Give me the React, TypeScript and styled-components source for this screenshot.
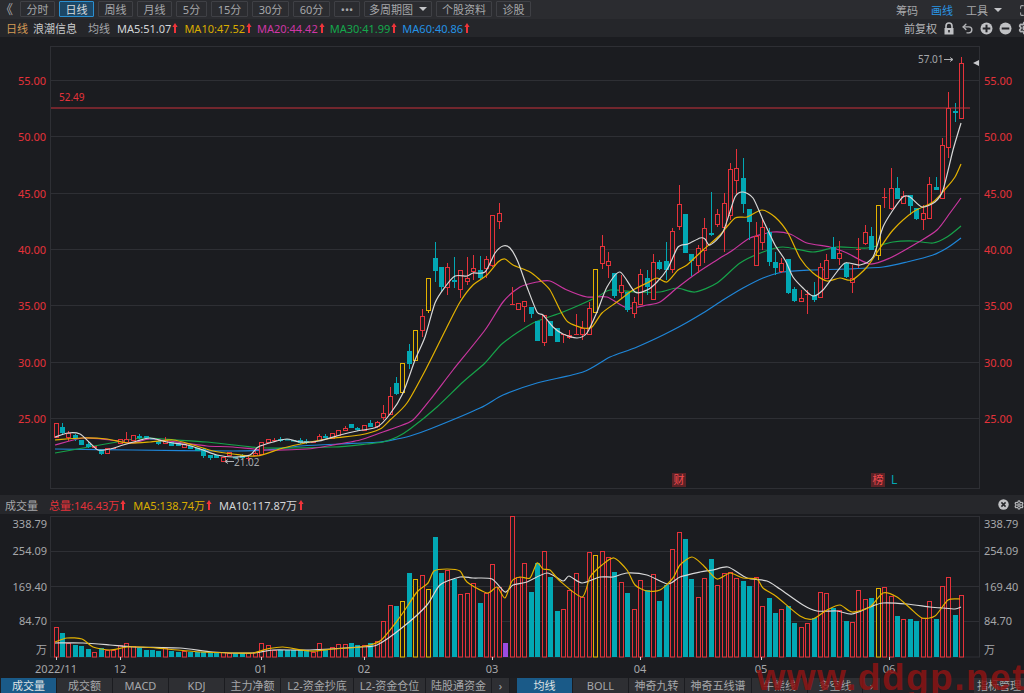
import styled, { createGlobalStyle } from "styled-components";
import { Maximize, Settings, Undo2 } from "lucide-react";

type Kind = "r" | "g" | "y" | "p";
type Candle = [number, Kind, number, number, number?, number?];
type Pt = [number, number];

const UI_FONT = `"Noto Sans", "Noto Sans CJK SC", sans-serif`;
const RED = "#e5323a";
const TEAL = "#02a8b4";
const YELLOW = "#e4b200";
const PURPLE = "#9a4ce2";
const WHITE_LINE = "#d8d8d8";
const MAGENTA = "#c9369f";
const GREEN = "#16a34a";
const BLUE = "#1f86d8";
const GRID = "#2e2f34";
const BG = "#1b1c20";

const kindColor = { r: RED, g: TEAL, y: YELLOW, p: PURPLE };

const stepX = 6.423;
const barX = (i: number) => Math.round(55.6 + stepX * i);

// index, kind, body top, body bottom, wick top, wick bottom (page pixels)
const candles: Candle[] = [
  [0, "r", 423, 437], [1, "g", 427, 433, 423, 434], [2, "r", 433, 437, 431, 441], [3, "g", 435, 439, 434, 441],
  [4, "g", 440, 445], [5, "g", 444, 447, 442, 448], [6, "r", 446, 447], [7, "g", 450, 454, 449, 455],
  [8, "r", 448, 453], [9, "r", 448, 448], [10, "r", 439, 443], [11, "r", 439, 442, 432, 442],
  [12, "r", 435, 440], [13, "g", 436, 438, 434, 439], [14, "g", 436, 438], [15, "g", 438, 439],
  [16, "g", 441, 444, 440, 445], [17, "r", 440, 443, 437, 444], [18, "g", 442, 446], [19, "g", 443, 446],
  [20, "r", 444, 447], [21, "g", 446, 449], [22, "g", 448, 451], [23, "g", 449, 456, 448, 458],
  [24, "g", 455, 458, 455, 460], [25, "g", 455, 458], [26, "r", 457, 461], [27, "r", 452, 455],
  [28, "g", 457, 458], [29, "g", 455, 458, 454, 460], [30, "r", 458, 458, 456, 461], [31, "r", 453, 455, 451, 456],
  [32, "r", 442, 454], [33, "r", 439, 442], [34, "r", 440, 440, 438, 442], [35, "g", 439, 441, 437, 442],
  [36, "g", 439, 440], [37, "g", 440, 441], [38, "g", 440, 443, 438, 444], [39, "g", 441, 443, 439, 444],
  [40, "r", 442, 442], [41, "r", 436, 440, 434, 440], [42, "g", 436, 438, 434, 438], [43, "r", 433, 438],
  [44, "r", 430, 435], [45, "r", 428, 430, 426, 431], [46, "g", 424, 428], [47, "g", 428, 430, 427, 431],
  [48, "r", 425, 430], [49, "g", 423, 427, 420, 427], [50, "r", 422, 426, 421, 428], [51, "r", 413, 417, 405, 420],
  [52, "r", 396, 414, 387, 415], [53, "g", 383, 394, 377, 395], [54, "y", 363, 392, 363, 394], [55, "g", 351, 364, 344, 369],
  [56, "y", 330, 360], [57, "r", 316, 330, 309, 337], [58, "y", 278, 310, 278, 313], [59, "g", 258, 271, 242, 282],
  [60, "g", 267, 287, 267, 292], [61, "r", 267, 287, 263, 295], [62, "g", 280, 282, 257, 288], [63, "r", 270, 289, 270, 298],
  [64, "r", 278, 281, 257, 285], [65, "r", 268, 271, 255, 280], [66, "g", 270, 278, 256, 280], [67, "r", 259, 268, 256, 278],
  [68, "r", 215, 265, 215, 267], [69, "r", 213, 221, 203, 229], [71, "r", 304, 304, 287, 304], [72, "r", 303, 309],
  [73, "r", 301, 306, 301, 322], [74, "g", 307, 314, 307, 318], [75, "g", 321, 341], [76, "r", 315, 342, 315, 346],
  [77, "g", 321, 336], [78, "g", 328, 342], [79, "r", 334, 334, 334, 343], [80, "r", 335, 337, 330, 339],
  [81, "r", 334, 334, 314, 335], [82, "r", 328, 334, 321, 340], [83, "r", 308, 334, 302, 334], [84, "y", 269, 312],
  [85, "r", 246, 263, 235, 269], [86, "r", 261, 265, 252, 278], [87, "g", 273, 296, 273, 298], [88, "r", 285, 292, 275, 298],
  [89, "g", 292, 310, 292, 312], [90, "r", 302, 313, 297, 318], [91, "r", 274, 304, 269, 304], [92, "g", 278, 287, 270, 295],
  [93, "r", 262, 299, 254, 299], [94, "g", 262, 269, 260, 270], [95, "g", 261, 270, 242, 280], [96, "r", 231, 269, 228, 273],
  [97, "r", 204, 226, 185, 230], [98, "g", 214, 253], [99, "g", 254, 261, 254, 276], [100, "r", 248, 265, 245, 273],
  [101, "r", 228, 250, 218, 263], [102, "g", 233, 235, 192, 236], [103, "r", 214, 224, 209, 227], [104, "r", 203, 227, 193, 252],
  [105, "r", 169, 215, 163, 220], [106, "r", 168, 180, 149, 195], [107, "g", 178, 204, 158, 213], [108, "g", 209, 222, 209, 240],
  [109, "r", 236, 265, 222, 265], [110, "r", 227, 242, 218, 250], [111, "g", 232, 262, 228, 266], [112, "g", 262, 268, 252, 275],
  [113, "r", 263, 271, 258, 273], [114, "g", 259, 293, 259, 294], [115, "g", 289, 301, 287, 302], [116, "r", 298, 301, 290, 302],
  [117, "r", 294, 294, 290, 314], [118, "g", 295, 300, 282, 302], [119, "r", 267, 297, 263, 298], [120, "r", 260, 278, 254, 278],
  [121, "g", 247, 259, 237, 259], [122, "r", 253, 258, 241, 265], [123, "g", 263, 277, 262, 278], [124, "r", 278, 282, 265, 293],
  [125, "r", 249, 249, 238, 268], [126, "r", 232, 243, 225, 245], [127, "g", 236, 250, 227, 250], [128, "y", 205, 255, 205, 260],
  [129, "r", 197, 197, 188, 208], [130, "r", 188, 208, 168, 210], [131, "g", 188, 199, 177, 199], [132, "r", 196, 203, 191, 203],
  [133, "g", 195, 206, 195, 215], [134, "g", 208, 219, 208, 220], [135, "r", 213, 219, 205, 230], [136, "r", 184, 218, 177, 218],
  [137, "g", 187, 190, 177, 190], [138, "r", 145, 198, 138, 198], [139, "r", 108, 147, 92, 158], [140, "g", 111, 113, 103, 122],
  [141, "r", 63, 118, 57, 118],
];

const volumes = `r627 g633 r643 g645 g646 g649 r652 g648 r650 r650 r645 r643 r646 g648 g650 g650 g651 r648 g651 g652 r651 g652 g652 g652 g652 g652 r652 r653 g653 g653 r653 r652 r643 r645 r650 g650 g650 g650 g650 g650 r652 r643 g649 r647 r644 r644 g643 g645 r645 g643 r641 r621 r605 g606 y601 g573 y579 r575 y589 g537 g573 r570 g579 r594 r593 r583 g603 r593 r564 r587 p643 r516 r577 r563 g592 g563 r551 g577 g611 r609 r590 r573 r597 r552 y555 r551 r557 g572 r582 g593 r609 r580 g590 r574 g601 g585 r549 r532 g539 g579 r597 r578 g559 r585 r573 r572 r578 g581 g586 r577 r606 g598 g613 r609 g606 g623 r627 r623 g618 r592 r593 g608 r610 g621 r622 r590 r599 g598 y588 r587 r596 g616 r619 g619 g621 r618 r601 g619 r586 r577 g615 r595`.split(" ");

const ma5: Pt[] = [[55,437],[68,433],[80,434],[90,443],[98,450],[110,449],[123,445],[137,441],[150,438],[167,442],[187,445],[203,450],[217,455],[233,457],[250,455],[258,447],[273,442],[287,439],[300,442],[319,441],[340,435],[357,431],[377,427],[390,414],[403,393],[415,360],[425,337],[435,303],[445,287],[455,276],[467,276],[473,273],[485,272],[495,253],[503,246],[510,248],[518,262],[527,287],[537,312],[543,315],[553,327],[563,334],[577,338],[587,333],[597,312],[607,287],[620,272],[635,292],[647,290],[657,282],[668,268],[678,247],[688,244],[700,238],[705,239],[710,245],[723,232],[735,197],[743,192],[753,198],[763,220],[775,245],[785,260],[793,277],[803,288],[813,296],[823,290],[833,277],[845,263],[860,265],[873,257],[883,227],[893,210],[903,197],[910,197],[922,207],[935,202],[943,190],[953,150],[961,123]];
const ma10: Pt[] = [[55,440],[82,438],[107,439],[127,443],[150,442],[173,440],[193,445],[213,451],[233,454],[257,456],[283,448],[310,442],[333,438],[360,435],[380,429],[390,420],[407,403],[427,367],[447,327],[460,302],[473,285],[487,275],[498,262],[505,259],[513,265],[530,272],[540,280],[550,290],[560,310],[568,322],[583,328],[592,327],[602,313],[617,302],[633,290],[647,283],[657,278],[667,282],[678,270],[687,265],[703,250],[720,235],[735,218],[747,217],[762,210],[775,217],[788,233],[800,258],[813,273],[827,281],[840,278],[852,280],[867,267],[880,248],[893,230],[913,212],[933,202],[947,187],[955,177],[961,164]];
const ma20: Pt[] = [[55,445],[83,438],[110,440],[133,443],[150,439],[183,443],[207,446],[233,447],[267,450],[307,449],[333,445],[360,440],[380,433],[397,427],[413,420],[430,400],[453,370],[485,330],[503,302],[520,287],[537,282],[550,281],[567,290],[587,297],[607,297],[627,308],[647,305],[660,302],[677,288],[697,273],[717,260],[733,250],[750,238],[773,232],[790,234],[807,243],[830,247],[847,253],[870,264],[890,258],[917,243],[937,230],[950,213],[961,198]];
const ma30: Pt[] = [[55,453],[83,448],[117,442],[143,438],[177,440],[207,442],[243,446],[267,448],[333,447],[367,444],[383,442],[397,437],[410,429],[437,407],[463,382],[485,363],[503,343],[533,323],[563,312],[597,297],[610,290],[637,292],[660,292],[677,288],[695,292],[717,283],[740,263],[763,252],[783,247],[813,252],[837,247],[867,248],[893,242],[913,241],[933,243],[947,237],[961,226]];
const ma60: Pt[] = [[55,449],[133,450],[233,451],[267,450],[300,446],[340,444],[380,442],[397,439],[410,436],[430,429],[480,408],[503,395],[537,383],[583,372],[610,357],[637,347],[673,330],[703,313],[723,300],[743,288],[763,278],[783,272],[810,270],[847,269],[883,267],[907,262],[933,255],[947,248],[961,238]];
const volMa5: Pt[] = [[55,642],[67,638],[82,639],[93,647],[110,650],[127,647],[143,647],[167,649],[200,652],[233,653],[253,653],[267,649],[283,647],[310,651],[333,649],[360,647],[380,641],[400,617],[417,592],[428,583],[434,571],[447,569],[460,571],[467,582],[487,593],[497,587],[505,598],[512,581],[520,577],[530,578],[537,563],[543,569],[550,570],[560,581],[582,597],[590,577],[602,565],[614,558],[627,570],[635,585],[647,591],[660,590],[673,578],[680,565],[692,557],[703,565],[717,579],[730,573],[743,578],[757,579],[763,588],[777,597],[800,616],[813,619],[827,610],[840,605],[852,612],[870,607],[883,593],[897,597],[910,608],[922,618],[935,616],[948,600],[960,599]];
const volMa10: Pt[] = [[55,643],[83,643],[110,645],[133,647],[180,648],[213,652],[253,653],[273,650],[310,650],[360,647],[377,645],[403,627],[427,605],[440,585],[460,577],[473,578],[492,579],[505,592],[513,585],[527,582],[547,573],[563,581],[569,576],[582,583],[600,577],[613,577],[627,573],[647,575],[668,584],[680,577],[700,572],[713,570],[728,567],[747,578],[767,581],[780,589],[803,605],[817,611],[837,611],[852,614],[870,607],[883,603],[907,604],[930,607],[943,608],[955,609],[961,607]];

// Catmull-Rom through the sampled points
function smooth(pts: Pt[]) {
  let d = `M${pts[0][0]} ${pts[0][1]}`;
  for (let i = 0; i < pts.length - 1; i++) {
    const a = pts[i - 1] || pts[i];
    const b = pts[i];
    const c = pts[i + 1];
    const e = pts[i + 2] || c;
    const c1x = b[0] + (c[0] - a[0]) / 8;
    const c1y = b[1] + (c[1] - a[1]) / 8;
    const c2x = c[0] - (e[0] - b[0]) / 8;
    const c2y = c[1] - (e[1] - b[1]) / 8;
    d += `C${c1x.toFixed(1)} ${c1y.toFixed(1)} ${c2x.toFixed(1)} ${c2y.toFixed(1)} ${c[0]} ${c[1]}`;
  }
  return d;
}

const GlobalStyle = createGlobalStyle`
  html, body { margin: 0; padding: 0; background: ${BG}; }
  * { box-sizing: border-box; }
`;

const Page = styled.div`
  position: relative;
  width: 1024px;
  height: 693px;
  overflow: hidden;
  display: flex;
  flex-direction: column;
  background: ${BG};
  font-family: ${UI_FONT};
  font-size: 11px;
  color: #a6a7aa;
`;

const Toolbar = styled.div`
  height: 19px;
  flex: none;
  display: flex;
  align-items: flex-start;
  padding-top: 1px;
  gap: 4px;
  background: #2b2c30;
`;

const Back = styled.span`
  width: 16px;
  line-height: 16px;
  font-size: 13px;
  color: #a6a7aa;
`;

const ToolButton = styled.div<{ $w: number; $active?: boolean }>`
  width: ${(p) => p.$w}px;
  height: 16px;
  flex: none;
  display: flex;
  align-items: center;
  justify-content: center;
  gap: 6px;
  border: 1px solid ${(p) => (p.$active ? "#2a8fd0" : "#3f4045")};
  background: ${(p) => (p.$active ? "#1c4766" : "#2b2c30")};
  color: ${(p) => (p.$active ? "#d8dadc" : "#a6a7aa")};
  border-radius: 1px;
  white-space: nowrap;
`;

const Caret = styled.span`
  width: 0;
  height: 0;
  border-left: 4px solid transparent;
  border-right: 4px solid transparent;
  border-top: 4px solid #c4c5c8;
`;

const ToolRight = styled.div`
  margin-left: auto;
  margin-right: -8px;
  display: flex;
  align-items: center;
  gap: 13px;
  height: 18px;
`;

const ToolLink = styled.span<{ $on?: boolean }>`
  color: ${(p) => (p.$on ? "#2a96e6" : "#a6a7aa")};
  display: flex;
  align-items: center;
  gap: 6px;
`;

const ExpandIcon = styled(Maximize)`
  margin-left: 4px;
  color: #a6a7aa;
`;

const LegendBar = styled.div`
  height: 18px;
  flex: none;
  display: flex;
  align-items: center;
  padding-left: 6px;
  background: #25262a;
  white-space: nowrap;
`;

const LegendText = styled.span<{ $color: string; $ml: number }>`
  color: ${(p) => p.$color};
  margin-left: ${(p) => p.$ml}px;
  display: inline-flex;
  align-items: center;
`;

const LegendTools = styled.div`
  margin-left: auto;
  margin-right: -8px;
  display: flex;
  align-items: center;
  gap: 6px;
  color: #b4b5b8;
`;

const VolumeTools = styled.div`
  margin-left: auto;
  margin-right: 0;
  display: flex;
  align-items: center;
  gap: 5px;
  color: #b4b5b8;
`;

const ChartSvg = styled.svg`
  display: block;
  flex: none;
  font-family: ${UI_FONT};
`;

const VolumeBar = styled.div`
  height: 19px;
  flex: none;
  display: flex;
  align-items: center;
  padding-left: 5px;
  background: #26272b;
  white-space: nowrap;
`;

const TabRow = styled.div`
  height: 15px;
  flex: none;
  display: flex;
  padding-left: 1px;
  background: #1f2024;
`;

const Tab = styled.div<{ $w: number; $active?: boolean; $ml?: number }>`
  width: ${(p) => p.$w}px;
  margin-left: ${(p) => p.$ml || 0}px;
  flex: none;
  display: flex;
  align-items: center;
  justify-content: center;
  border-right: 1px solid #1b1c20;
  background: ${(p) => (p.$active ? "#1a5a88" : "#2e2f33")};
  color: ${(p) => (p.$active ? "#dfe2e4" : "#a6a7aa")};
  line-height: 15px;
  white-space: nowrap;
`;

const Watermark = styled.div`
  position: absolute;
  right: -2px;
  bottom: -3px;
  font-family: "Liberation Sans", sans-serif;
  font-weight: 700;
  font-size: 37px;
  line-height: 37px;
  letter-spacing: 1.5px;
  color: rgba(140, 20, 20, 0.85);
  white-space: nowrap;
`;

function UpArrow() {
  return (
    <svg width="6" height="12" viewBox="0 0 6 12" style={{ marginLeft: 1 }}>
      <path d="M3 1 L5.6 5 H4 V11 H2 V5 H.4 Z" fill="#f0343a" />
    </svg>
  );
}

function CircleSign({ plus }: { plus?: boolean }) {
  return (
    <svg width="13" height="13" viewBox="0 0 13 13">
      <circle cx="6.5" cy="6.5" r="6" fill="#c0c1c4" />
      <rect x="2.7" y="5.5" width="7.6" height="2" fill="#25262a" />
      {plus && <rect x="5.5" y="2.7" width="2" height="7.6" fill="#25262a" />}
    </svg>
  );
}

function LockIcon() {
  return (
    <svg width="12" height="13" viewBox="0 0 12 13">
      <path d="M3 6V4a3 3 0 0 1 6 0v2" fill="none" stroke="#c0c1c4" strokeWidth="1.6" />
      <rect x="1.5" y="6" width="9" height="6.5" fill="#c0c1c4" />
      <rect x="5.2" y="8" width="1.6" height="2.4" fill="#25262a" />
    </svg>
  );
}

function CloseDot() {
  return (
    <svg width="11" height="11" viewBox="0 0 11 11">
      <circle cx="5.5" cy="5.5" r="5.2" fill="#c0c1c4" />
      <path d="M3.4 3.4l4.2 4.2M7.6 3.4l-4.2 4.2" stroke="#26272b" strokeWidth="1.5" />
    </svg>
  );
}

function Candles() {
  return (
    <g>
      {candles.map(([i, k, top, bottom, high, low]) => {
        const x = barX(i);
        const c = kindColor[k];
        const hi = high ?? top;
        const lo = low ?? bottom;
        return (
          <g key={i}>
            {hi < top && <line x1={x + 0.5} x2={x + 0.5} y1={hi} y2={top} stroke={c} />}
            {lo > bottom && <line x1={x + 0.5} x2={x + 0.5} y1={bottom} y2={lo} stroke={c} />}
            {k === "g" ? (
              <rect x={x - 2} y={top} width={5} height={Math.max(bottom - top, 1.5)} fill={c} />
            ) : top === bottom ? (
              <line x1={x - 2} x2={x + 3} y1={top + 0.5} y2={top + 0.5} stroke={c} />
            ) : (
              <rect x={x - 1.5} y={top + 0.5} width={4} height={bottom - top} fill={BG} stroke={c} />
            )}
          </g>
        );
      })}
    </g>
  );
}

function Line({ pts, color }: { pts: Pt[]; color: string }) {
  return <path d={smooth(pts)} fill="none" stroke={color} strokeWidth={1.2} strokeLinejoin="round" />;
}

const priceLevels = [55, 50, 45, 40, 35, 30, 25];
const priceY = (p: number) => Math.round(80 + (55 - p) * 11.27) + 0.5;

function PriceChart() {
  return (
    <ChartSvg width={1024} height={458} viewBox="0 37 1024 458">
      <rect x={50.5} y={46.5} width={929} height={442} fill="none" stroke={GRID} />
      {priceLevels.map((p) => (
        <g key={p}>
          <line x1={51} x2={979} y1={priceY(p)} y2={priceY(p)} stroke={GRID} />
          <text x={46} y={priceY(p) + 4.5} fontSize={11} fill={RED} textAnchor="end">
            {p.toFixed(2)}
          </text>
          <text x={984} y={priceY(p) + 4.5} fontSize={11} fill={RED}>
            {p.toFixed(2)}
          </text>
        </g>
      ))}
      <text x={59} y={101} fontSize={10} fill={RED}>52.49</text>
      <Line pts={ma60} color={BLUE} />
      <Line pts={ma30} color={GREEN} />
      <Line pts={ma20} color={MAGENTA} />
      <Candles />
      <Line pts={ma10} color={YELLOW} />
      <Line pts={ma5} color={WHITE_LINE} />
      <line x1={51} x2={970} y1={108} y2={108} stroke="#c9303a" strokeWidth={1.2} />
      <text x={918} y={63} fontSize={10} fill="#a6a7aa">57.01</text>
      <path d="M944 59.5h9m-3-2 3 2-3 2" fill="none" stroke="#b0b1b4" />
      <path d="M979 60v6l-6-3z" fill="#c8c9cc" />
      <path d="M234 461.5h-9m3-2-3 2 3 2" fill="none" stroke="#b0b1b4" />
      <text x={234} y={466} fontSize={10} fill="#a6a7aa">21.02</text>
      <rect x={672} y={473} width={14} height={14} fill="#5c2226" />
      <text x={673.5} y={484} fontSize={11} fill="#ef4a4f">财</text>
      <rect x={871} y={473} width={14} height={14} fill="#5c2226" />
      <text x={872.5} y={484} fontSize={11} fill="#ef4a4f">榜</text>
      <text x={891} y={484} fontSize={12} fill={TEAL}>L</text>
    </ChartSvg>
  );
}

const volLevels: [string, number, number][] = [
  ["338.79", 516, 528],
  ["254.09", 551.5, 555],
  ["169.40", 586.5, 591],
  ["84.70", 621.5, 625],
];
const months: [string, number][] = [
  ["2022/11", 56], ["12", 120], ["01", 261], ["02", 364], ["03", 492], ["04", 640], ["05", 761], ["06", 889],
];

function VolumeChart() {
  return (
    <ChartSvg width={1024} height={164} viewBox="0 514 1024 164">
      <rect x={50.5} y={516.5} width={929} height={140.5} fill="none" stroke={GRID} />
      {volLevels.map(([label, grid, base]) => (
        <g key={label}>
          {grid > 520 && <line x1={51} x2={979} y1={grid} y2={grid} stroke={GRID} />}
          <text x={47} y={base} fontSize={11} fill="#a6a7aa" textAnchor="end">{label}</text>
          <text x={984} y={base} fontSize={11} fill="#a6a7aa">{label}</text>
        </g>
      ))}
      <text x={47} y={654} fontSize={11} fill="#a6a7aa" textAnchor="end">万</text>
      <text x={984} y={654} fontSize={11} fill="#a6a7aa">万</text>
      {volumes.map((v, i) => {
        const k = v[0] as Kind;
        const top = Number(v.slice(1));
        const x = barX(i);
        return k === "g" || k === "p" ? (
          <rect key={i} x={x - 2} y={top} width={5} height={657 - top} fill={kindColor[k]} />
        ) : (
          <rect key={i} x={x - 1.5} y={top + 0.5} width={4} height={656.5 - top} fill={BG} stroke={kindColor[k]} />
        );
      })}
      <Line pts={volMa10} color={WHITE_LINE} />
      <Line pts={volMa5} color={YELLOW} />
      {months.map(([label, x]) => (
        <g key={label}>
          <line x1={x + 0.5} x2={x + 0.5} y1={657} y2={660} stroke="#d0d0d0" />
          <text x={x} y={673} fontSize={11} fill="#a6a7aa" textAnchor="middle">{label}</text>
        </g>
      ))}
    </ChartSvg>
  );
}

const toolButtons: [string, number][] = [
  ["分时", 35], ["日线", 35], ["周线", 35], ["月线", 35], ["5分", 31], ["15分", 37], ["30分", 37], ["60分", 37], ["•••", 26],
];

const tabsLeft: [string, number][] = [
  ["成交量", 56], ["成交额", 56], ["MACD", 56], ["KDJ", 56], ["主力净额", 56], ["L2-资金抄底", 73], ["L2-资金仓位", 72], ["陆股通资金", 66], ["›", 18],
];
const tabsRight: [string, number][] = [
  ["均线", 56], ["BOLL", 56], ["神奇九转", 56], ["神奇五线谱", 67], ["牛熊线", 56], ["多空线", 55], ["›", 18],
];

const maLegend: [string, string, number][] = [
  ["MA5:51.07", "#d4d5d8", 7],
  ["MA10:47.52", "#d9ac00", 6],
  ["MA20:44.42", "#cf36a6", 5],
  ["MA30:41.99", "#14a84c", 5],
  ["MA60:40.86", "#2492e4", 5],
];

export default function App() {
  return (
    <Page>
      <GlobalStyle />
      <Toolbar>
        <Back>《</Back>
        {toolButtons.map(([label, w]) => (
          <ToolButton key={label} $w={w} $active={label === "日线"}>{label}</ToolButton>
        ))}
        <ToolButton $w={68}>多周期图<Caret /></ToolButton>
        <ToolButton $w={56}>个股资料</ToolButton>
        <ToolButton $w={35}>诊股</ToolButton>
        <ToolRight>
          <ToolLink>筹码</ToolLink>
          <ToolLink $on>画线</ToolLink>
          <ToolLink>工具<Caret /></ToolLink>
          <ExpandIcon size={13} />
        </ToolRight>
      </Toolbar>
      <LegendBar>
        <LegendText $color="#d49a55" $ml={0}>日线</LegendText>
        <LegendText $color="#c9cacc" $ml={5}>浪潮信息</LegendText>
        <LegendText $color="#a6a7aa" $ml={11}>均线</LegendText>
        {maLegend.map(([label, color, ml]) => (
          <LegendText key={label} $color={color} $ml={ml}>{label}<UpArrow /></LegendText>
        ))}
        <LegendTools>
          <span>前复权</span>
          <LockIcon />
          <Undo2 size={13} strokeWidth={2.6} />
          <CircleSign plus />
          <CircleSign />
          <Settings size={14} strokeWidth={3} />
        </LegendTools>
      </LegendBar>
      <PriceChart />
      <VolumeBar>
        <LegendText $color="#a6a7aa" $ml={0}>成交量</LegendText>
        <LegendText $color={RED} $ml={11}>总量:146.43万<UpArrow /></LegendText>
        <LegendText $color="#d9ac00" $ml={7}>MA5:138.74万<UpArrow /></LegendText>
        <LegendText $color="#d4d5d8" $ml={7}>MA10:117.87万<UpArrow /></LegendText>
        <VolumeTools>
          <CloseDot />
          <Settings size={10} strokeWidth={3} />
        </VolumeTools>
      </VolumeBar>
      <VolumeChart />
      <TabRow>
        {tabsLeft.map(([label, w], i) => (
          <Tab key={label} $w={w} $active={i === 0}>{label}</Tab>
        ))}
        {tabsRight.map(([label, w], i) => (
          <Tab key={label + i} $w={w} $active={i === 0} $ml={i === 0 ? 7 : 0}>{label}</Tab>
        ))}
        <Tab $w={51} $ml={93}>指标管理</Tab>
      </TabRow>
      <Watermark>www.ddgp.net</Watermark>
    </Page>
  );
}
